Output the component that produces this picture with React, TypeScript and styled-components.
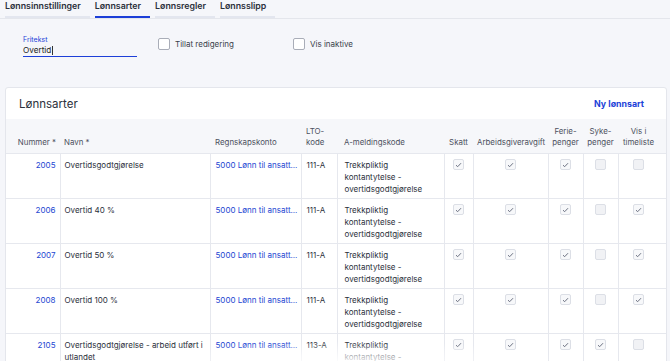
import React from "react";
import styled, { createGlobalStyle } from "styled-components";

const Global = createGlobalStyle`
  html, body { margin: 0; padding: 0; overflow: hidden; }
  body { background: #f5f6fa; font-family: Inter, "Noto Sans", sans-serif; color: #2b303b; }
`;

const Page = styled.div`
  width: 670px;
  height: 361px;
  overflow: hidden;
  position: relative;
`;

const TabBar = styled.div`
  display: flex;
  gap: 5px;
  padding-left: 5px;
  height: 18px;
  border-bottom: 1px solid #e4e6ec;
`;

const Tab = styled.div<{ $active?: boolean }>`
  font-size: 8.8px;
  font-weight: 600;
  color: #2b303b;
  padding: 1px 9px 0 0;
  height: 15px;
  line-height: 10px;
  border-bottom: 2px solid ${(p) => (p.$active ? "#1d3fd8" : "#e3e6ef")};
`;

const Filters = styled.div`
  display: flex;
  align-items: flex-start;
  padding: 16px 0 0 23px;
  height: 52px;
`;

const Field = styled.div`
  width: 114px;
  display: flex;
  flex-direction: column;
  border-bottom: 1.5px solid #1d3fd8;
  margin-right: 21px;
`;

const FieldLabel = styled.div`
  font-size: 7px;
  color: #1d3fd8;
  line-height: 10px;
`;

const FieldValue = styled.div`
  font-size: 8.2px;
  line-height: 11px;
  color: #222;
  display: flex;
  align-items: center;
`;

const Caret = styled.span`
  display: inline-block;
  width: 1px;
  height: 9px;
  background: #333;
  margin-left: 0.5px;
`;

const CheckLabel = styled.label`
  display: flex;
  align-items: center;
  gap: 5px;
  font-size: 8px;
  color: #3a3f4b;
  margin-top: 3px;
  width: 135px;
`;

const BigBox = styled.span`
  width: 10px;
  height: 10px;
  border: 1px solid #a9adb8;
  border-radius: 2px;
  background: #fff;
`;

const Card = styled.div`
  margin: 0 3px 0 5px;
  background: #fff;
  border: 1px solid #e4e6ec;
  border-radius: 3px;
  overflow: hidden;
`;

const CardHead = styled.div`
  height: 31px;
  display: flex;
  align-items: center;
  justify-content: space-between;
  padding: 0 22px 0 13px;
`;

const Title = styled.div`
  font-size: 11.5px;
  color: #2b303b;
`;

const NewLink = styled.div`
  font-size: 8.8px;
  font-weight: 700;
  color: #1d3fd8;
`;

const Table = styled.table`
  border-collapse: collapse;
  table-layout: fixed;
  width: 662px;
  font-size: 8px;
`;

const HeadRow = styled.tr`
  background: #f6f7fa;
  height: 34px;
`;

const Th = styled.th<{ $align?: string; $pl?: number; $pr?: number }>`
  font-weight: 400;
  color: #4c5160;
  font-size: 7.9px;
  line-height: 11px;
  vertical-align: bottom;
  text-align: ${(p) => p.$align || "left"};
  padding: 0 ${(p) => (p.$pr !== undefined ? p.$pr : 4)}px 5px ${(p) => (p.$pl !== undefined ? p.$pl : 4)}px;
  white-space: nowrap;
`;

const Row = styled.tr`
  height: 43px;
  border-top: 1px solid #e6e8ee;
`;

const Td = styled.td<{ $align?: string; $pl?: number; $pr?: number }>`
  vertical-align: top;
  text-align: ${(p) => p.$align || "left"};
  padding: 5px ${(p) => (p.$pr !== undefined ? p.$pr : 4)}px 3px ${(p) => (p.$pl !== undefined ? p.$pl : 4)}px;
  line-height: 12px;
  color: #2b303b;
  border-left: 1px solid #e6e8ee;
  &:first-child { border-left: none; }
`;

const Link = styled.span`
  color: #2346d2;
  white-space: nowrap;
  display: block;
`;

const Box = styled.span<{ $on: boolean }>`
  display: inline-flex;
  align-items: center;
  justify-content: center;
  width: 9px;
  height: 9px;
  border: 1px solid #dcdfe6;
  border-radius: 2px;
  background: ${(p) => (p.$on ? "#f7f8fa" : "#f1f2f5")};
`;

const Fade = styled.div`
  position: absolute;
  left: 120px;
  right: 100px;
  bottom: -20px;
  height: 40px;
  background: radial-gradient(ellipse at center, rgba(255,255,255,0.85) 0%, rgba(255,255,255,0) 70%);
  pointer-events: none;
`;

const Check = () => (
  <svg width="7" height="6" viewBox="0 0 7 6">
    <path d="M1 3.2 L2.7 4.7 L6 1.2" fill="none" stroke="#6b7080" strokeWidth="1" />
  </svg>
);

const rows = [
  { n: "2005", name: "Overtidsgodtgjørelse", lto: "111-A", c: [1, 1, 1, 0, 0] },
  { n: "2006", name: "Overtid 40 %", lto: "111-A", c: [1, 1, 1, 0, 1] },
  { n: "2007", name: "Overtid 50 %", lto: "111-A", c: [1, 1, 1, 0, 1] },
  { n: "2008", name: "Overtid 100 %", lto: "111-A", c: [1, 1, 1, 0, 1] },
  { n: "2105", name: "Overtidsgodtgjørelse - arbeid utført i utlandet", lto: "113-A", c: [1, 1, 1, 1, 0] },
];

const widths = [54, 150, 91, 36, 107, 29, 75, 35, 35, 50];

export default function App() {
  return (
    <Page>
      <Global />
      <TabBar>
        <Tab>Lønnsinnstillinger</Tab>
        <Tab $active>Lønnsarter</Tab>
        <Tab>Lønnsregler</Tab>
        <Tab>Lønnsslipp</Tab>
      </TabBar>
      <Filters>
        <Field>
          <FieldLabel>Fritekst</FieldLabel>
          <FieldValue>
            Overtid<Caret />
          </FieldValue>
        </Field>
        <CheckLabel>
          <BigBox />
          Tillat redigering
        </CheckLabel>
        <CheckLabel>
          <BigBox />
          Vis inaktive
        </CheckLabel>
      </Filters>
      <Card>
        <CardHead>
          <Title>Lønnsarter</Title>
          <NewLink>Ny lønnsart</NewLink>
        </CardHead>
        <Table>
          <colgroup>
            {widths.map((w, i) => (
              <col key={i} style={{ width: w }} />
            ))}
          </colgroup>
          <thead>
            <HeadRow>
              <Th $align="right">Nummer *</Th>
              <Th>Navn *</Th>
              <Th $pl={5}>Regnskapskonto</Th>
              <Th $pl={5}>
                LTO-
                <br />
                kode
              </Th>
              <Th $pl={7}>A-meldingskode</Th>
              <Th $align="center">Skatt</Th>
              <Th $align="center">Arbeidsgiveravgift</Th>
              <Th $align="center">
                Ferie-
                <br />
                penger
              </Th>
              <Th $align="center">
                Syke-
                <br />
                penger
              </Th>
              <Th $align="center" $pr={13}>
                Vis i
                <br />
                timeliste
              </Th>
            </HeadRow>
          </thead>
          <tbody>
            {rows.map((r) => (
              <Row key={r.n}>
                <Td $align="right">
                  <Link>{r.n}</Link>
                </Td>
                <Td>{r.name}</Td>
                <Td $pl={5} $pr={2}>
                  <Link>5000 Lønn til ansatt...</Link>
                </Td>
                <Td $pl={5}>{r.lto}</Td>
                <Td $pl={7}>
                  Trekkpliktig
                  <br />
                  kontantytelse -
                  <br />
                  overtidsgodtgjørelse
                </Td>
                {r.c.map((v, i) => (
                  <Td key={i} $align="center" $pr={i === 4 ? 13 : 4}>
                    <Box $on={!!v}>{v ? <Check /> : null}</Box>
                  </Td>
                ))}
              </Row>
            ))}
          </tbody>
        </Table>
      </Card>
      <Fade />
    </Page>
  );
}
